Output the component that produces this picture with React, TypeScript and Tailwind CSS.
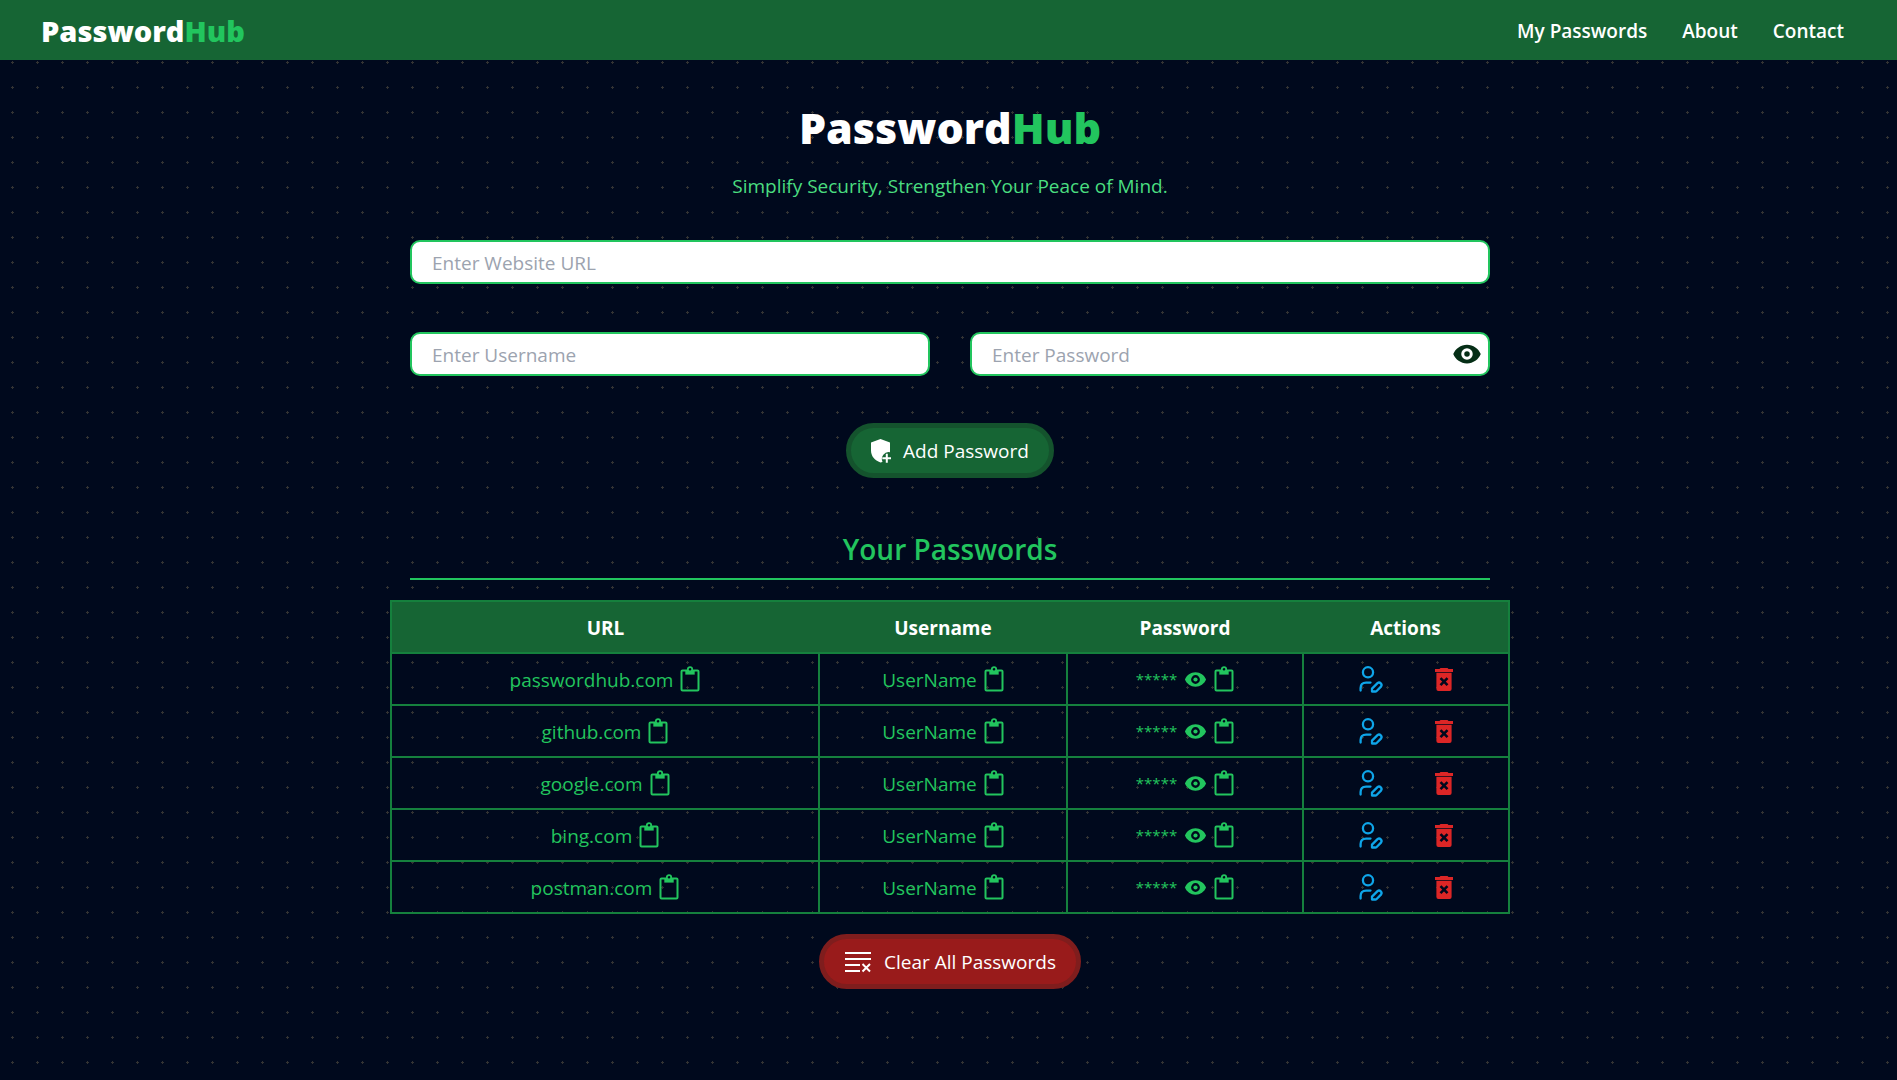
import React, { useState } from "react";

type Entry = { url: string; user: string };

const entries: Entry[] = [
  { url: "passwordhub.com", user: "UserName" },
  { url: "github.com", user: "UserName" },
  { url: "google.com", user: "UserName" },
  { url: "bing.com", user: "UserName" },
  { url: "postman.com", user: "UserName" },
];

function EyeIcon({ className }: { className: string }) {
  return (
    <svg viewBox="0 0 24 24" fill="currentColor" className={className} aria-hidden="true">
      <path
        fillRule="evenodd"
        d="M12 4.5C7 4.5 2.73 7.61 1 12c1.73 4.39 6 7.5 11 7.5s9.27-3.11 11-7.5c-1.73-4.39-6-7.5-11-7.5zm0 12.1a4.6 4.6 0 1 1 0-9.2 4.6 4.6 0 0 1 0 9.2z"
      />
      <circle cx="12" cy="12" r="2.2" />
    </svg>
  );
}

function ClipboardIcon() {
  return (
    <svg viewBox="0 0 20 26" className="h-[26px] w-5" fill="none" stroke="currentColor" aria-hidden="true">
      <rect x="1.5" y="4.5" width="17" height="20" rx="1" strokeWidth="2" />
      <path d="M5.300 4h9.400v4.600H5.300z" fill="currentColor" stroke="none" />
      <circle cx="10" cy="3.300" r="2.200" strokeWidth="1.800" fill="#00091d" />
    </svg>
  );
}

function ShieldPlusIcon() {
  return (
    <svg viewBox="0 0 20 24" className="h-6 w-5" aria-hidden="true">
      <path
        fill="currentColor"
        d="M9.5 0 0 3.6v8C0 17 3.6 21.600 9.500 23.500c.8-.2 1.400-.5 2-.8a6.800 6.800 0 0 1 7.400-9.500c.1-.5.1-1 .1-1.600v-8z"
      />
      <path d="M15.800 14.700v9M11.300 19.200h9" stroke="currentColor" strokeWidth="2" />
    </svg>
  );
}

function ClearListIcon() {
  return (
    <svg viewBox="0 0 28 22" className="h-[22px] w-7" fill="none" stroke="currentColor" strokeWidth="2" aria-hidden="true">
      <path d="M1 2h26M1 8h26M1 14h15M1 20h15M18.500 13l7.500 7.500M26 13l-7.500 7.500" />
    </svg>
  );
}

function UserEditIcon() {
  return (
    <svg viewBox="0 0 24 28" className="h-7 w-6" fill="none" stroke="currentColor" strokeWidth="2.300" strokeLinecap="round" strokeLinejoin="round" aria-hidden="true">
      <circle cx="9" cy="7.300" r="5.100" />
      <path d="M1.600 25.500v-2.500c0-3.500 2-5.400 5.500-5.400H11.500" />
      <path d="M13 26.500v-2.900l5.500-5.500a2.500 2.500 0 0 1 3.500 3.500l-4.600 4.600c-.3.300-.6.300-1 .300z" />
    </svg>
  );
}

function TrashIcon() {
  return (
    <svg viewBox="0 0 18 23" className="h-[23px] w-[18px]" aria-hidden="true">
      <path fill="currentColor" d="M5.500 0h7l1 1H18v2.900H0V1h4.500zM1.400 4.700h15.200V21a2 2 0 0 1-2 2H3.400a2 2 0 0 1-2-2z" />
      <path d="M5.500 10.200l7 7M12.500 10.200l-7 7" stroke="#00091d" strokeWidth="2.600" />
    </svg>
  );
}

function IconButton({ label, className, children }: { label: string; className?: string; children: React.ReactNode }) {
  return (
    <button type="button" aria-label={label} className={`flex cursor-pointer items-center ${className ?? ""}`}>
      {children}
    </button>
  );
}

const inputClass =
  "h-11 w-full rounded-[10px] border-2 border-[#22c55e] bg-white px-5 pt-0.5 text-[19px] text-black outline-none placeholder:text-[#9ca3af]";
const cellClass = "h-[52px] border-2 border-[#15803d]";
const cellRowClass = "flex items-center justify-center gap-[7px]";

export default function App() {
  const [visible, setVisible] = useState(false);

  return (
    <div className="min-h-screen bg-black bg-[radial-gradient(#ffffff33_7%,#00091d_7%)] bg-[size:25px_25px] font-['Open_Sans','Noto_Sans',sans-serif] text-[19px]">
      <header className="flex h-[60px] items-center justify-between bg-[#166534] pt-0.5 pr-[53px] pl-[41px] text-white">
        <a href="#" className="text-[29px] font-extrabold">
          Password<span className="text-[#22c55e]">Hub</span>
        </a>
        <nav className="flex gap-[35px] font-semibold">
          <a href="#passwords">My Passwords</a>
          <a href="#about">About</a>
          <a href="#contact">Contact</a>
        </nav>
      </header>

      <main className="flex flex-col items-center pt-10 pl-[3px]">
        <h1 className="text-[43px] leading-[56px] font-extrabold text-white">
          Password<span className="text-[#22c55e]">Hub</span>
        </h1>
        <p className="mt-4 leading-7 text-[#4ade80]">Simplify Security, Strengthen Your Peace of Mind.</p>

        <form className="mt-10 flex w-full max-w-[1080px] flex-col items-center" onSubmit={(e) => e.preventDefault()}>
          <input aria-label="Website URL" type="text" placeholder="Enter Website URL" className={inputClass} />
          <div className="mt-12 grid w-full grid-cols-2 gap-10">
            <input aria-label="Username" type="text" placeholder="Enter Username" className={inputClass} />
            <div className="relative">
              <input
                aria-label="Password"
                type={visible ? "text" : "password"}
                placeholder="Enter Password"
                className={inputClass}
              />
              <button
                type="button"
                aria-label="Show password"
                onClick={() => setVisible(!visible)}
                className="absolute inset-y-0 right-2 flex cursor-pointer items-center text-[#052e16]"
              >
                <EyeIcon className="size-[30px]" />
              </button>
            </div>
          </div>
          <button
            type="submit"
            className="mt-[47px] flex h-[55px] cursor-pointer items-center gap-3 rounded-full border-5 border-[#14532d] bg-[#166534] px-5 text-white"
          >
            <ShieldPlusIcon />
            <span className="pt-0.5">Add Password</span>
          </button>
        </form>

        <h2 className="mt-[50px] w-full max-w-[1080px] border-b-2 border-[#22c55e] pb-2 text-center text-[28px] leading-[42px] font-semibold text-[#22c55e]">
          Your Passwords
        </h2>

        <table id="passwords" className="mt-5 w-full max-w-[1120px] table-fixed border-collapse text-center text-[#22c55e]">
          <colgroup>
            <col className="w-[428px]" />
            <col className="w-[248px]" />
            <col className="w-[236px]" />
            <col className="w-[206px]" />
          </colgroup>
          <thead className="bg-[#166534] text-white">
            <tr>
              {["URL", "Username", "Password", "Actions"].map((h) => (
                <th key={h} className="h-[52px] border-y-2 border-[#15803d] pt-0.5 font-bold first:border-l-2 last:border-r-2">
                  {h}
                </th>
              ))}
            </tr>
          </thead>
          <tbody>
            {entries.map((entry) => (
              <tr key={entry.url}>
                <td className={cellClass}>
                  <div className={cellRowClass}>
                    <span className="pt-0.5">{entry.url}</span>
                    <IconButton label="Copy URL">
                      <ClipboardIcon />
                    </IconButton>
                  </div>
                </td>
                <td className={cellClass}>
                  <div className={cellRowClass}>
                    <span className="pt-0.5">{entry.user}</span>
                    <IconButton label="Copy username">
                      <ClipboardIcon />
                    </IconButton>
                  </div>
                </td>
                <td className={cellClass}>
                  <div className={cellRowClass}>
                    <span className="text-[15px]">*****</span>
                    <IconButton label="Reveal password">
                      <EyeIcon className="size-[23px]" />
                    </IconButton>
                    <IconButton label="Copy password">
                      <ClipboardIcon />
                    </IconButton>
                  </div>
                </td>
                <td className={cellClass}>
                  <div className="flex items-center justify-center gap-[52px]">
                    <IconButton label="Edit entry" className="text-[#0ea5e9]">
                      <UserEditIcon />
                    </IconButton>
                    <IconButton label="Delete entry" className="text-[#dc2626]">
                      <TrashIcon />
                    </IconButton>
                  </div>
                </td>
              </tr>
            ))}
          </tbody>
        </table>

        <button
          type="button"
          className="mt-5 flex h-[55px] cursor-pointer items-center gap-3 rounded-full border-5 border-[#7f1d1d] bg-[#991b1b] px-5 text-white"
        >
          <ClearListIcon />
          <span className="pt-0.5">Clear All Passwords</span>
        </button>
      </main>
    </div>
  );
}
